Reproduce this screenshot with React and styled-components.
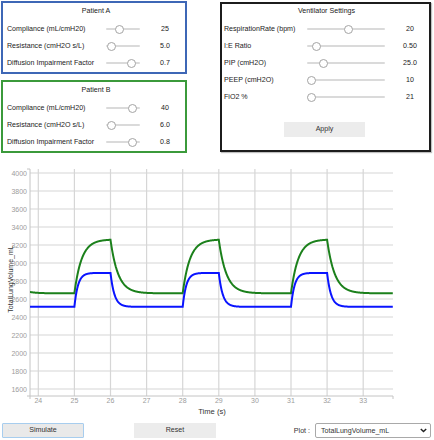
import React from 'react';
import styled, { createGlobalStyle } from 'styled-components';

const GlobalStyle = createGlobalStyle`
  html, body { margin: 0; padding: 0; background: #fff; }
  body {
    font-family: "Liberation Sans", Arial, sans-serif;
    font-size: 7.1px;
    color: #222;
  }
`;

// chart scales (svg starts at page y = 158)
const X = (t) => 38.3 + (t - 24) * 36.1;
const Y = (v) => 16 + (4000 - v) * 0.09;
const PLOT = { left: 30, right: 393, top: 12, bottom: 239 };

const volumeAt = (t, base, peak, tauI, tauE) => {
  const start = 22 + Math.floor((t - 22) / 3) * 3;
  const dt = t - start;
  if (dt < 1) return base + (peak - base) * (1 - Math.exp(-dt / tauI));
  const endInsp = base + (peak - base) * (1 - Math.exp(-1 / tauI));
  return base + (endInsp - base) * Math.exp(-(dt - 1) / tauE);
};

const buildPath = (base, peak, tauI, tauE) => {
  let d = '';
  for (let t = 23.77; t <= 33.82; t += 0.005) {
    const x = X(t).toFixed(2);
    const y = Y(volumeAt(t, base, peak, tauI, tauE)).toFixed(2);
    d += (d ? 'L' : 'M') + x + ',' + y;
  }
  return d;
};

const greenPath = buildPath(2663, 3262, 0.2, 0.21);
const bluePath = buildPath(2513, 2890, 0.1, 0.11);

const patientA = [
  { label: 'Compliance (mL/cmH20)', value: '25', pos: 0.34 },
  { label: 'Resistance (cmH2O s/L)', value: '5.0', pos: 0.02 },
  { label: 'Diffusion Impairment Factor', value: '0.7', pos: 0.82 },
];

const patientB = [
  { label: 'Compliance (mL/cmH20)', value: '40', pos: 0.86 },
  { label: 'Resistance (cmH2O s/L)', value: '6.0', pos: 0.02 },
  { label: 'Diffusion Impairment Factor', value: '0.8', pos: 0.9 },
];

const ventilator = [
  { label: 'RespirationRate (bpm)', value: '20', pos: 0.53 },
  { label: 'I:E Ratio', value: '0.50', pos: 0.07 },
  { label: 'PIP (cmH2O)', value: '25.0', pos: 0.18 },
  { label: 'PEEP (cmH2O)', value: '10', pos: 0 },
  { label: 'FiO2 %', value: '21', pos: 0 },
];

const yTicks = [1600, 1800, 2000, 2200, 2400, 2600, 2800, 3000, 3200, 3400, 3600, 3800, 4000];
const xTicks = [24, 25, 26, 27, 28, 29, 30, 31, 32, 33];

const Slider = ({ pos }) => (
  <Track>
    <Thumb style={{ left: `calc(${pos} * (100% - 9px))` }} />
  </Track>
);

const Patient = ({ title, rows, color }) => (
  <PatientBox color={color}>
    <BoxTitle>{title}</BoxTitle>
    {rows.map((r) => (
      <PatientRow key={r.label}>
        <Label>{r.label}</Label>
        <Slider pos={r.pos} />
        <Value>{r.value}</Value>
      </PatientRow>
    ))}
  </PatientBox>
);

const Chart = () => (
  <ChartSvg width="434" height="262" viewBox="0 0 434 262">
    <defs>
      <clipPath id="plotClip">
        <rect x={PLOT.left} y={PLOT.top} width={PLOT.right - PLOT.left} height={PLOT.bottom - PLOT.top} />
      </clipPath>
    </defs>
    {yTicks.map((v) => (
      <g key={v}>
        <line x1={PLOT.left} x2={PLOT.right} y1={Y(v)} y2={Y(v)} stroke="#d6d6d6" strokeWidth="1.2" />
        <text x="27" y={Y(v) + 2.5} textAnchor="end" fontSize="7" fill="#9c9c9c">{v}</text>
      </g>
    ))}
    {xTicks.map((t) => (
      <g key={t}>
        <line x1={X(t)} x2={X(t)} y1={PLOT.top} y2={PLOT.bottom} stroke="#d6d6d6" strokeWidth="1.2" />
        <text x={X(t)} y="246" textAnchor="middle" fontSize="7" fill="#9c9c9c">{t}</text>
      </g>
    ))}
    <path d={`M${PLOT.left - 3},${PLOT.top}H${PLOT.left}V${PLOT.bottom}H${PLOT.left - 3}`} fill="none" stroke="#c4c4c4" />
    <path d={`M${PLOT.left},${PLOT.bottom + 3}V${PLOT.bottom}H${PLOT.right}V${PLOT.bottom + 3}`} fill="none" stroke="#c4c4c4" />
    <g clipPath="url(#plotClip)">
      <path d={greenPath} fill="none" stroke="#1b801b" strokeWidth="2" />
      <path d={bluePath} fill="none" stroke="#0a14ff" strokeWidth="2" />
    </g>
    <text x="212" y="257" textAnchor="middle" fontSize="7.6" fill="#333">Time (s)</text>
    <text transform="translate(12.5,122) rotate(-90)" x="0" y="0" textAnchor="middle" fontSize="7" fill="#333">
      TotalLungVolume_mL
    </text>
  </ChartSvg>
);

export default function App() {
  return (
    <>
      <GlobalStyle />
      <Page>
        <Top>
          <PatientColumn>
            <Patient title="Patient A" rows={patientA} color="#3e67b6" />
            <Patient title="Patient B" rows={patientB} color="#3b9a3b" />
          </PatientColumn>
          <VentBox>
            <BoxTitle>Ventilator Settings</BoxTitle>
            {ventilator.map((r) => (
              <VentRow key={r.label}>
                <Label>{r.label}</Label>
                <Slider pos={r.pos} />
                <VentValue>{r.value}</VentValue>
              </VentRow>
            ))}
            <ApplyRow>
              <FlatButton>Apply</FlatButton>
            </ApplyRow>
          </VentBox>
        </Top>
        <Chart />
        <BottomBar>
          <SimulateButton>Simulate</SimulateButton>
          <ResetButton>Reset</ResetButton>
          <Spacer />
          <PlotLabel>Plot :</PlotLabel>
          <FakeSelect>
            <span>TotalLungVolume_mL</span>
            <svg width="7" height="5" viewBox="0 0 7 5">
              <path d="M0.8 0.9L3.5 3.6L6.2 0.9" fill="none" stroke="#222" strokeWidth="1.4" />
            </svg>
          </FakeSelect>
        </BottomBar>
      </Page>
    </>
  );
}

const Page = styled.div`
  width: 434px;
  height: 440px;
  overflow: hidden;
`;

const Top = styled.div`
  display: flex;
  align-items: flex-start;
  padding: 1px 3px 0 1px;
  gap: 33px;
`;

const PatientColumn = styled.div`
  display: flex;
  flex-direction: column;
  gap: 6px;
  width: 186px;
`;

const PatientBox = styled.div`
  border: 2px solid ${({ color }) => color};
  padding: 1px 0 0 4px;
  height: 73px;
  box-sizing: border-box;
`;

const BoxTitle = styled.div`
  text-align: center;
  line-height: 14px;
  height: 14px;
  margin-bottom: 2.5px;
  color: #1a1a1a;
`;

const PatientRow = styled.div`
  display: grid;
  grid-template-columns: 99px 34px 1fr;
  align-items: center;
  height: 17px;
`;

const Label = styled.div`
  white-space: nowrap;
  color: #222;
`;

const Value = styled.div`
  text-align: center;
  padding-left: 5px;
  color: #222;
`;

const Track = styled.div`
  position: relative;
  height: 9px;

  &::before {
    content: '';
    position: absolute;
    left: 0;
    right: 0;
    top: 3.5px;
    height: 2px;
    border-radius: 1px;
    background: #dadada;
  }
`;

const Thumb = styled.div`
  position: absolute;
  top: 0;
  width: 9px;
  height: 9px;
  box-sizing: border-box;
  border-radius: 50%;
  border: 1px solid #a4a4a4;
  background: #fff;
`;

const VentBox = styled.div`
  margin-top: 1px;
  width: 211px;
  height: 150px;
  box-sizing: border-box;
  border: 2px solid #1c1c1c;
  box-shadow: 1px 1px 1px rgba(0, 0, 0, 0.25);
  padding: 0 0 0 2px;
`;

const VentRow = styled.div`
  display: grid;
  grid-template-columns: 83px 78px 1fr;
  align-items: center;
  height: 17px;
`;

const VentValue = styled.div`
  text-align: center;
  padding-left: 6px;
  color: #222;
`;

const ApplyRow = styled.div`
  display: flex;
  justify-content: center;
  margin-top: 16.5px;
  padding-right: 4px;
`;

const FlatButton = styled.div`
  width: 81px;
  height: 15px;
  line-height: 15px;
  text-align: center;
  background: #ececec;
  color: #333;
`;

const ChartSvg = styled.svg`
  display: block;
  margin-top: 4px;
  font-family: "Liberation Sans", Arial, sans-serif;
`;

const BottomBar = styled.div`
  display: flex;
  align-items: center;
  height: 17px;
  margin-top: 3px;
  padding: 0 3px 0 2px;
`;

const SimulateButton = styled.div`
  width: 82px;
  height: 15px;
  line-height: 13px;
  box-sizing: border-box;
  text-align: center;
  background: #e9e9e9;
  border: 1px solid #a7cdee;
  border-radius: 1px;
  color: #333;
`;

const ResetButton = styled(FlatButton)`
  width: 82px;
  margin-left: 50px;
`;

const Spacer = styled.div`
  flex: 1;
`;

const PlotLabel = styled.div`
  margin-right: 5px;
  color: #333;
`;

const FakeSelect = styled.div`
  display: flex;
  align-items: center;
  justify-content: space-between;
  width: 116px;
  height: 15px;
  box-sizing: border-box;
  border: 1px solid #a9a9a9;
  border-radius: 2px;
  padding: 0 3px 0 5px;
  color: #333;
  background: #fff;
`;
